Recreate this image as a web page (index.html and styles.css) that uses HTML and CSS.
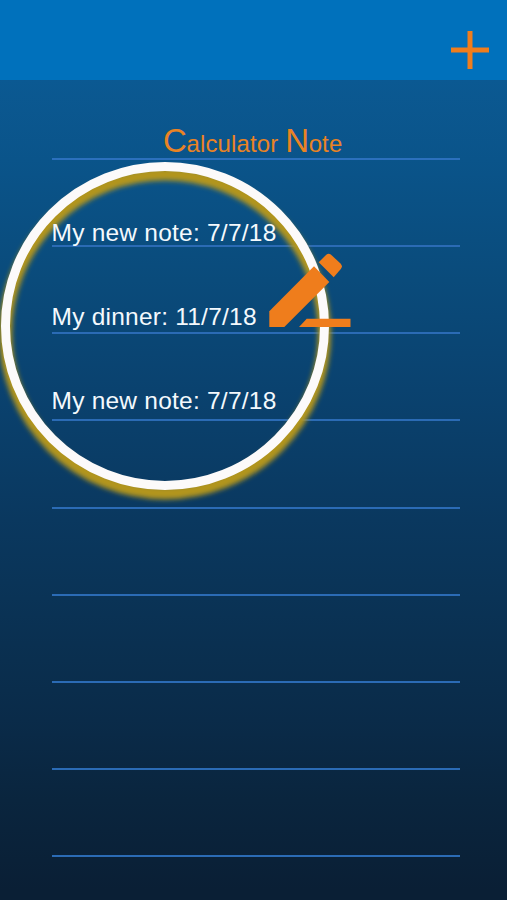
FILE: index.html
```html
<!DOCTYPE html>
<html lang="en">
<head>
<meta charset="utf-8">
<title>Calculator Note</title>
<link rel="stylesheet" href="styles.css">
</head>
<body>
<div class="app">
  <header class="bar">
    <button class="add" aria-label="Add note">
      <svg viewBox="0 0 38 38"><path d="M19 0V38M0 19H38"/></svg>
    </button>
  </header>
  <main class="page">
    <h1 class="title"><span class="cap">C</span>alculator <span class="cap">N</span>ote</h1>
    <div class="sheet">
      <div class="rules">
        <i></i><i></i><i></i><i></i><i></i><i></i><i></i><i></i>
      </div>
      <ul class="notes">
        <li>My new note: 7/7/18</li>
        <li>My dinner: 11/7/18</li>
        <li>My new note: 7/7/18</li>
      </ul>
    </div>
  </main>
  <svg class="ring" viewBox="0 0 360 360">
    <defs>
      <filter id="soft" x="-10%" y="-10%" width="120%" height="120%"><feGaussianBlur stdDeviation="2.7"/></filter>
    </defs>
    <circle class="glow" cx="180" cy="187.500" r="159.500" filter="url(#soft)"/>
    <circle class="band" cx="180" cy="180" r="159.500"/>
  </svg>
  <svg class="pencil" viewBox="0 0 82 75">
    <path d="M.3 58.300 45 13.300 60.300 29 15.300 74H.3Z"/>
    <path d="M49.700 9.300 57.300 1.700Q59.500-.3 61.800 1.600L71.500 10.500Q74 13 72 15.700L64.700 24.300Z"/>
    <path d="M30 74 37.700 65.700H81.500V74Z"/>
  </svg>
</div>
</body>
</html>
```
FILE: styles.css
```css
* { box-sizing: border-box; }
body { margin: 0; }
.app {
  position: relative;
  width: 507px;
  height: 900px;
  overflow: hidden;
  display: flex;
  flex-direction: column;
  font-family: "Liberation Sans", Arial, sans-serif;
  background: linear-gradient(#0b5992 80px, #0a548a 160px, #0a4b7b 280px, #0a426f 390px, #0a385f 520px, #0a2f4f 660px, #0a2b49 720px, #0a253e 800px, #0a1f35 890px);
}
.bar {
  flex: none;
  height: 79.500px;
  padding: 31px 18px 0 0;
  display: flex;
  justify-content: flex-end;
  align-items: flex-start;
  background: #0071bc;
}
.add { width: 38px; height: 38px; padding: 0; border: 0; background: none; }
.add svg { display: block; width: 38px; height: 38px; fill: none; stroke: #ee7d1c; stroke-width: 5; }
.page { flex: 1; padding: 0 47px 0 51.500px; }
.title {
  height: 80.300px;
  margin: 0;
  padding-top: 43px;
  border-bottom: 2px solid #2b70bd;
  line-height: 36px;
  font-size: 24px;
  font-weight: 400;
  text-align: center;
  text-indent: -6px;
  letter-spacing: .13px;
  white-space: nowrap;
  color: #e98324;
}
.cap { font-size: 33px; letter-spacing: -.4px; }
.sheet { display: grid; }
.rules, .notes { grid-area: 1 / 1; }
.rules i { display: block; height: 87.200px; border-bottom: 2px solid #2b6bb5; }
.notes {
  position: relative;
  z-index: 2;
  margin: 0;
  padding: 59px 0 0;
  list-style: none;
  font-size: 24.500px;
  line-height: 28px;
  letter-spacing: .23px;
  color: #f4f9fd;
}
.notes li { height: 84.200px; }
.ring { position: absolute; left: -15px; top: 146px; width: 360px; height: 360px; z-index: 1; }
.ring circle { fill: none; }
.glow { stroke: #b2951f; stroke-width: 13; }
.band { stroke: #fcfafa; stroke-width: 9; }
.pencil { position: absolute; left: 269px; top: 253px; width: 82px; height: 75px; z-index: 3; fill: #ef7d1c; }
```
